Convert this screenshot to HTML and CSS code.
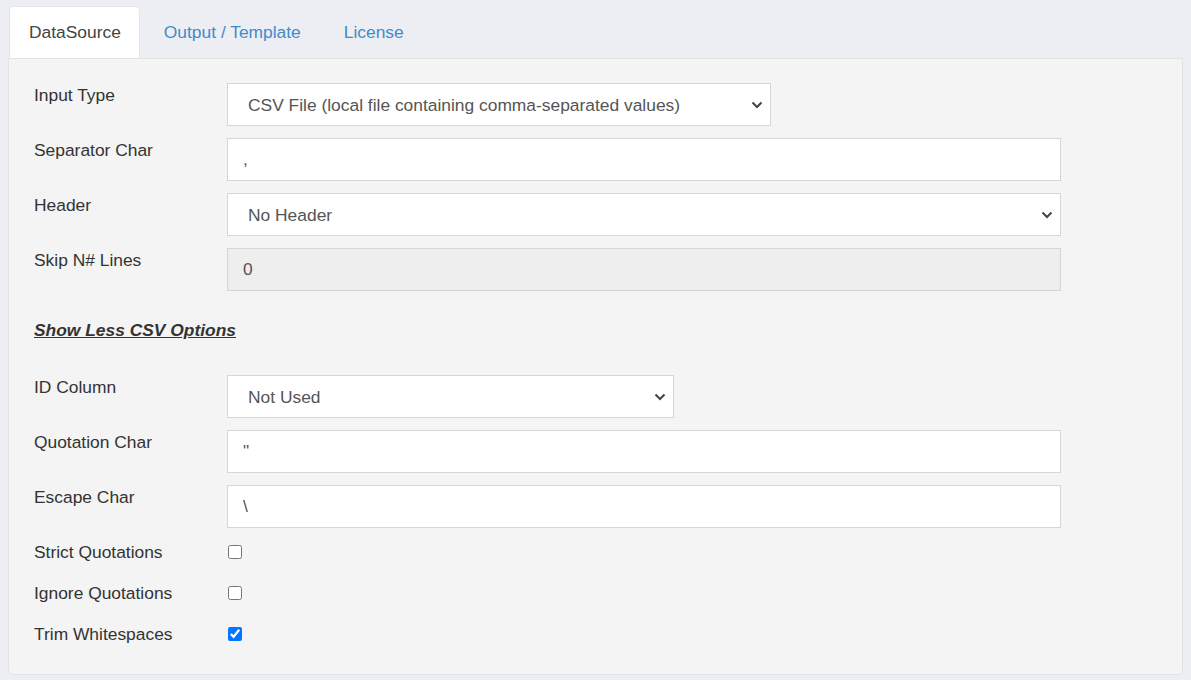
FILE: index.html
```html
<!DOCTYPE html>
<html lang="en">
<head>
    <meta charset="UTF-8">
    <title>CSV DataSource</title>
    <link rel="stylesheet" href="styles.css">
</head>
<body>
    <div class="tabs">
        <a class="tab active">DataSource</a>
        <a class="tab">Output / Template</a>
        <a class="tab">License</a>
    </div>

    <div class="panel">
        <div class="row">
            <label>Input Type</label>
            <select class="field short">
                <option>CSV File (local file containing comma-separated values)</option>
            </select>
        </div>
        <div class="row">
            <label>Separator Char</label>
            <input class="field" type="text" value=",">
        </div>
        <div class="row">
            <label>Header</label>
            <select class="field">
                <option>No Header</option>
            </select>
        </div>
        <div class="row">
            <label>Skip N# Lines</label>
            <input class="field" type="text" value="0" disabled>
        </div>

        <p class="toggle"><a>Show Less CSV Options</a></p>

        <div class="row">
            <label>ID Column</label>
            <select class="field mid">
                <option>Not Used</option>
            </select>
        </div>
        <div class="row">
            <label>Quotation Char</label>
            <input class="field" type="text" value='"'>
        </div>
        <div class="row">
            <label>Escape Char</label>
            <input class="field" type="text" value="\">
        </div>
        <div class="row check">
            <label>Strict Quotations</label>
            <input type="checkbox">
        </div>
        <div class="row check">
            <label>Ignore Quotations</label>
            <input type="checkbox">
        </div>
        <div class="row check">
            <label>Trim Whitespaces</label>
            <input type="checkbox" checked>
        </div>
    </div>
</body>
</html>
```

FILE: styles.css
```css
* {
    box-sizing: border-box;
}

body {
    margin: 0;
    padding: 6px 8px 0;
    background-color: #eceef3;
    font-family: "Liberation Sans", Arial, sans-serif;
    font-size: 17.4px;
    color: #333;
}

.tabs {
    display: flex;
    gap: 4px;
    padding-left: 1px;
}

.tab {
    display: block;
    height: 52px;
    line-height: 52px;
    padding: 0 19px 0 20px;
    color: #428bca;
    border-radius: 5px 5px 0 0;
    cursor: pointer;
}

.tab.active {
    background: #fff;
    color: #444;
    border: 1px solid #e3e5ea;
    border-bottom: none;
    line-height: 50px;
    padding: 0 18px 0 19px;
}

.panel {
    background: #f4f4f4;
    border: 1px solid #e1e2e6;
    border-radius: 0 0 5px 5px;
    padding: 24px 25px 12px;
    height: 617px;
}

.row {
    display: grid;
    grid-template-columns: 193px 1fr;
    align-items: start;
    margin-bottom: 12px;
}

.row label {
    line-height: 24px;
}

.field {
    width: 834px;
    height: 43px;
    padding: 0 15px;
    border: 1px solid #d4d6de;
    border-radius: 0;
    background-color: #fff;
    font-family: inherit;
    font-size: 17.4px;
    color: #555;
    outline: none;
}

.field:disabled {
    background-color: #eeeeee;
}

select.field {
    appearance: none;
    padding: 0 20px;
    background-image: url("data:image/svg+xml,%3Csvg xmlns='http://www.w3.org/2000/svg' width='12' height='8' viewBox='0 0 12 8'%3E%3Cpath d='M1.5 1.5 L6 6 L10.5 1.5' fill='none' stroke='%23444' stroke-width='2'/%3E%3C/svg%3E");
    background-repeat: no-repeat;
    background-position: right 7px center;
}

.field.short {
    width: 544px;
}

.field.mid {
    width: 447px;
}

.toggle {
    margin: 27px 0 33px;
    line-height: 24px;
}

.toggle a {
    font-weight: bold;
    font-style: italic;
    text-decoration: underline;
    color: #333;
    cursor: pointer;
}

.row.check {
    margin-bottom: 17px;
    align-items: center;
}

.row.check input {
    width: 14px;
    height: 14px;
    margin: 0 0 0 1px;
}
```
